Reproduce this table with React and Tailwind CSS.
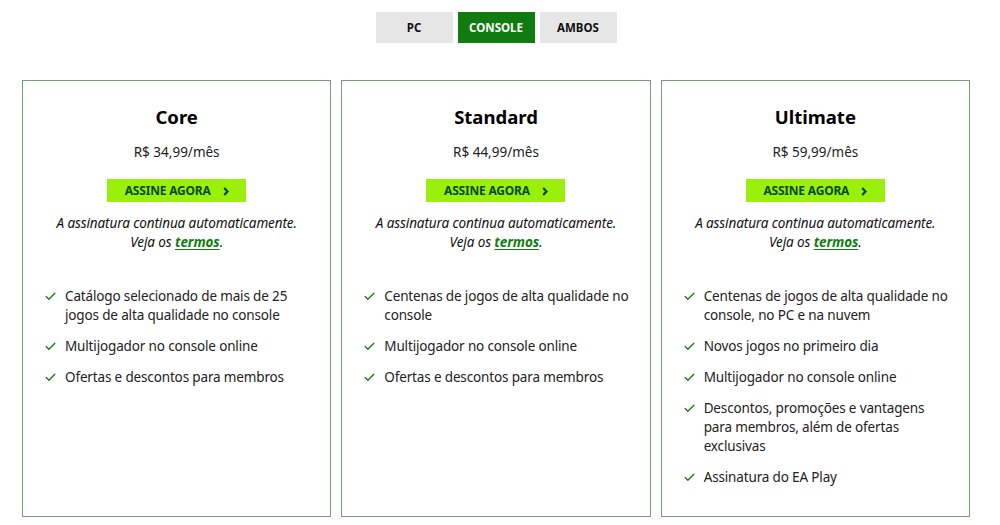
import { Check } from "lucide-react";

const plans = [
  {
    name: "Core",
    price: "R$ 34,99/mês",
    features: [
      "Catálogo selecionado de mais de 25 jogos de alta qualidade no console",
      "Multijogador no console online",
      "Ofertas e descontos para membros",
    ],
  },
  {
    name: "Standard",
    price: "R$ 44,99/mês",
    features: [
      "Centenas de jogos de alta qualidade no console",
      "Multijogador no console online",
      "Ofertas e descontos para membros",
    ],
  },
  {
    name: "Ultimate",
    price: "R$ 59,99/mês",
    features: [
      "Centenas de jogos de alta qualidade no console, no PC e na nuvem",
      "Novos jogos no primeiro dia",
      "Multijogador no console online",
      "Descontos, promoções e vantagens para membros, além de ofertas exclusivas",
      "Assinatura do EA Play",
    ],
  },
];

function Tabs() {
  const tabs = ["PC", "CONSOLE", "AMBOS"];
  return (
    <div className="flex justify-center gap-[5px] pt-3 w-[992px]">
      {tabs.map((t) => (
        <button
          key={t}
          className={
            t === "CONSOLE"
              ? "w-[77px] h-[31px] bg-[#107c10] text-white text-[11.5px] font-bold"
              : "w-[77px] h-[31px] bg-[#e6e6e6] text-[#111] text-[11.5px] font-bold"
          }
        >
          {t}
        </button>
      ))}
    </div>
  );
}

function PlanCard({ plan }) {
  return (
    <div className="border border-[#6ea56e] h-[437px] pl-[21px] pr-[18px] pt-[24px]">
      <h2 className="text-center text-[18.5px] font-bold text-black leading-6 pr-[3px]">{plan.name}</h2>
      <p className="text-center text-[13.5px] text-[#222] mt-[13px] leading-5 pr-[3px]">{plan.price}</p>
      <div className="flex justify-center mt-[17px] pr-[3px]">
        <a className="w-[139px] h-[23px] bg-[#9bf00b] text-[#054b16] text-[12px] font-bold flex items-center justify-center gap-[12px] tracking-[-0.2px]">
          ASSINE AGORA
          <svg width="6" height="9" viewBox="0 0 6 9" className="mt-[1px]">
            <polyline points="1.2,1 4.5,4.5 1.2,8" fill="none" stroke="#054b16" strokeWidth="2.2" />
          </svg>
        </a>
      </div>
      <p className="text-center italic text-[13.5px] text-[#111] leading-[19px] mt-[12px] tracking-[-0.1px] pr-[3px]">
        A assinatura continua automaticamente.
        <br />
        Veja os{" "}
        <a className="text-[#107c10] font-bold underline underline-offset-2">termos</a>.
      </p>
      <ul className="mt-[35px] flex flex-col gap-[12px]">
        {plan.features.map((f) => (
          <li key={f} className="flex gap-[8px] text-[13.5px] leading-[19px] text-[#222] tracking-[-0.15px]">
            <Check className="w-[13px] h-[13px] mt-[3px] shrink-0 text-[#107c10]" strokeWidth={2.4} />
            <span>{f}</span>
          </li>
        ))}
      </ul>
    </div>
  );
}

export default function App() {
  return (
    <div className="w-[1000px] h-[525px] bg-white font-['Noto_Sans',sans-serif]">
      <Tabs />
      <div className="grid grid-cols-3 gap-[10px] ml-[22px] mt-[37px] w-[948px]">
        {plans.map((p) => (
          <PlanCard key={p.name} plan={p} />
        ))}
      </div>
    </div>
  );
}
